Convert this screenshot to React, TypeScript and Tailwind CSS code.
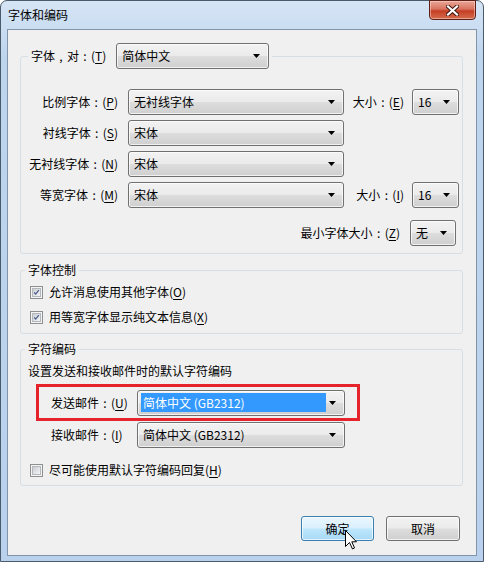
import React from 'react';

const Key: React.FC<{ k: string }> = ({ k }) => (
  <>
    (<span className="underline underline-offset-[2px]">{k}</span>)
  </>
);

// centred full-width punctuation, as the system font draws it
const Colon = () => <span className="inline-block w-[12px] text-center">:</span>;
const Comma = () => <span className="inline-block w-[12px] text-center">,</span>;

const Arrow = () => (
  <svg width="7" height="4" viewBox="0 0 7 4" className="shrink-0">
    <path d="M0 0h7L3.5 4z" fill="#000" />
  </svg>
);

const Combo: React.FC<{ value: string; className?: string; selected?: boolean }> = ({ value, className = '', selected = false }) => (
  <div
    className={`flex h-[26px] shrink-0 items-center justify-between rounded-[3px] border border-[#707070] bg-[linear-gradient(#f2f2f2,#ebebeb_48%,#dddddd_52%,#cfcfcf)] shadow-[inset_0_0_0_1px_rgba(255,255,255,0.7)] pr-[8px] ${className}`}
  >
    {selected ? (
      <span className="ml-[3px] flex h-[19px] w-[185px] items-center bg-[#3399ff] pl-[2px] text-white">{value}</span>
    ) : (
      <span className="whitespace-nowrap pl-[5px]">{value}</span>
    )}
    <Arrow />
  </div>
);

const Check: React.FC<{ checked?: boolean }> = ({ checked = false }) => (
  <span className="flex h-[13px] w-[13px] shrink-0 items-center justify-center border border-[#8e8f8f] bg-[#f4f4f4]">
    <span className="flex h-[9px] w-[9px] items-center justify-center border border-[#b4b8bd] bg-[linear-gradient(135deg,#c9cdd3,#f5f5f5)]">
      {checked && (
        <svg width="9" height="9" viewBox="0 0 9 9">
          <path d="M1.5 4.5L3.5 6.5L7.5 1.5" fill="none" stroke="#4a5f8f" strokeWidth="1.6" />
        </svg>
      )}
    </span>
  </span>
);

const FontRow: React.FC<{ label: string; k: string; value: string; size?: React.ReactNode }> = ({ label, k, value, size }) => (
  <div className="flex h-[26px] items-center">
    <span className="w-[97px] shrink-0 whitespace-nowrap text-right">
      {label}
      <Colon />
      <Key k={k} />
    </span>
    <Combo value={value} className="ml-[10px] w-[216px]" />
    {size}
  </div>
);

const SizeBox: React.FC<{ k: string }> = ({ k }) => (
  <>
    <span className="ml-[6px] w-[54px] shrink-0 whitespace-nowrap text-right">
      大小
      <Colon />
      <Key k={k} />
    </span>
    <Combo value="16" className="ml-[8px] w-[47px]" />
  </>
);

export default function App() {
  return (
    <div className="flex h-[562px] w-[484px] flex-col rounded-t-[7px] border border-[#4b5a6b] bg-[linear-gradient(#d6e5f5,#bed5ee_10%,#b9d1ec)] font-['Noto_Sans_CJK_SC',sans-serif] text-[12px] leading-[14px] text-black">
      {/* title bar */}
      <div className="flex h-[28px] shrink-0 items-start justify-between">
        <span className="pl-[7px] pt-[7px]">字体和编码</span>
        <div className="-mt-px mr-[7px] flex h-[20px] w-[47px] items-center justify-center rounded-b-[4px] border border-[#5e1f17] bg-[linear-gradient(#eaa697,#d8735f_45%,#c43e23_55%,#d46d4f)] shadow-[inset_0_0_0_1px_rgba(255,220,210,0.5)]">
          <svg width="13" height="11" viewBox="0 0 13 11">
            <path d="M2 1.5L11 9.5M11 1.5L2 9.5" stroke="#3b1510" strokeWidth="4" strokeLinecap="square" />
            <path d="M2 1.5L11 9.5M11 1.5L2 9.5" stroke="#fff" strokeWidth="2.2" strokeLinecap="square" />
          </svg>
        </div>
      </div>

      {/* client area */}
      <div className="mx-[6px] mb-[5px] flex flex-1 flex-col border border-[#8294aa] bg-[#f0f0f0]">
        {/* fonts group */}
        <fieldset className="ml-[12px] mr-[13px] mt-[13px] rounded-[3px] border border-[#d5dfe5] pb-[7px] pt-[20px]">
          <legend className="ml-[7px] px-[3px]">
            <div className="flex items-center">
              <span className="whitespace-nowrap">
                字体
                <Comma />
                对
                <Colon />
                <Key k="T" />
              </span>
              <Combo value="简体中文" className="ml-[10px] w-[153px]" />
            </div>
          </legend>
          <div className="flex flex-col gap-[5px]">
            <FontRow label="比例字体" k="P" value="无衬线字体" size={<SizeBox k="E" />} />
            <FontRow label="衬线字体" k="S" value="宋体" />
            <FontRow label="无衬线字体" k="N" value="宋体" />
            <FontRow label="等宽字体" k="M" value="宋体" size={<SizeBox k="I" />} />
          </div>
          <div className="mt-[12px] flex h-[26px] items-center justify-end pr-[6px]">
            <span className="whitespace-nowrap">
              最小字体大小
              <Colon />
              <Key k="Z" />
            </span>
            <Combo value="无" className="ml-[10px] w-[46px]" />
          </div>
        </fieldset>

        {/* font control group */}
        <fieldset className="ml-[12px] mr-[13px] mt-[9px] rounded-[3px] border border-[#d5dfe5] pb-[6px] pt-[5px]">
          <legend className="ml-[4px] px-[3px]">字体控制</legend>
          <div className="flex flex-col gap-[5px]">
            <label className="ml-[9px] flex h-[20px] items-center gap-[6px]">
              <Check checked />
              <span>
                允许消息使用其他字体<Key k="O" />
              </span>
            </label>
            <label className="ml-[9px] flex h-[20px] items-center gap-[6px]">
              <Check checked />
              <span>
                用等宽字体显示纯文本信息<Key k="X" />
              </span>
            </label>
          </div>
        </fieldset>

        {/* encoding group */}
        <fieldset className="ml-[12px] mr-[13px] mt-[8px] rounded-[3px] border border-[#d5dfe5] pb-[5px] pt-[8px]">
          <legend className="ml-[4px] px-[3px]">字符编码</legend>
          <div className="ml-[7px]">设置发送和接收邮件时的默认字符编码</div>
          <div className="ml-[15px] mt-[6px] flex h-[37px] w-[324px] items-center border-[3px] border-[#e5232b] pl-[12px]">
            <span className="w-[86px] whitespace-nowrap">
              发送邮件
              <Colon />
              <Key k="U" />
            </span>
            <Combo value="简体中文 (GB2312)" selected className="w-[208px]" />
          </div>
          <div className="ml-[30px] mt-px flex h-[26px] items-center">
            <span className="w-[86px] whitespace-nowrap">
              接收邮件
              <Colon />
              <Key k="I" />
            </span>
            <Combo value="简体中文 (GB2312)" className="w-[208px]" />
          </div>
          <label className="ml-[9px] mt-[12px] flex h-[20px] items-center gap-[6px]">
            <Check />
            <span>
              尽可能使用默认字符编码回复<Key k="H" />
            </span>
          </label>
        </fieldset>

        {/* buttons */}
        <div className="mr-[16px] mt-[30px] flex justify-end gap-[12px]">
          <button className="relative flex h-[25px] w-[73px] items-center justify-center rounded-[3px] border border-[#3c7fb1] bg-[linear-gradient(#eaf6fd,#d9f0fc_48%,#bee6fd_52%,#a7d9f5)] shadow-[inset_0_0_0_1px_rgba(255,255,255,0.7)]">
            确定
            <svg width="13" height="20" viewBox="0 0 13 20" className="absolute left-[43px] top-[13px]">
              <path d="M0.5 0.5V16.5L4.5 12.5L7.5 19L9.5 18L6.8 11.8H11.5Z" fill="#fff" stroke="#000" strokeWidth="1" strokeLinejoin="round" />
            </svg>
          </button>
          <button className="flex h-[25px] w-[74px] items-center justify-center rounded-[3px] border border-[#707070] bg-[linear-gradient(#f2f2f2,#ebebeb_48%,#dddddd_52%,#cfcfcf)] shadow-[inset_0_0_0_1px_rgba(255,255,255,0.7)]">
            取消
          </button>
        </div>
      </div>
    </div>
  );
}
